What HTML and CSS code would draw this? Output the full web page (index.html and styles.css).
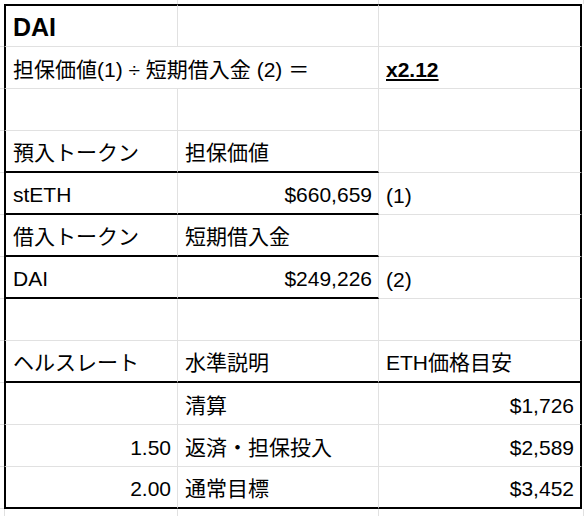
FILE: index.html
```html
<!DOCTYPE html>
<html lang="ja">
<head>
<meta charset="utf-8">
<title>DAI</title>
<link rel="stylesheet" href="styles.css">
</head>
<body>
<div class="sheet">
  <!-- top strip -->
  <div class="strip"></div>
  <div class="strip t"></div>
  <div class="strip t"></div>
  <div class="strip"></div>
  <div class="strip t"></div>

  <!-- row 1 -->
  <div class="e"></div>
  <div class="c a r1 title">DAI</div>
  <div class="c r1"></div>
  <div class="c z r1"></div>
  <div class="x"></div>

  <!-- row 2 -->
  <div class="e"></div>
  <div class="c a span2">担保価値(1) ÷ 短期借入金 (2) ＝</div>
  <div class="c z"><span class="ratio">x2.12</span></div>
  <div class="x"></div>

  <!-- row 3 -->
  <div class="e"></div>
  <div class="c a"></div>
  <div class="c"></div>
  <div class="c z"></div>
  <div class="x"></div>

  <!-- row 4 -->
  <div class="e"></div>
  <div class="c a bb">預入トークン</div>
  <div class="c bb">担保価値</div>
  <div class="c z"></div>
  <div class="x"></div>

  <!-- row 5 -->
  <div class="e"></div>
  <div class="c a bb">stETH</div>
  <div class="c bb num">$660,659</div>
  <div class="c z">(1)</div>
  <div class="x"></div>

  <!-- row 6 -->
  <div class="e"></div>
  <div class="c a bb">借入トークン</div>
  <div class="c bb">短期借入金</div>
  <div class="c z"></div>
  <div class="x"></div>

  <!-- row 7 -->
  <div class="e"></div>
  <div class="c a bb">DAI</div>
  <div class="c bb num">$249,226</div>
  <div class="c z">(2)</div>
  <div class="x"></div>

  <!-- row 8 -->
  <div class="e"></div>
  <div class="c a"></div>
  <div class="c"></div>
  <div class="c z"></div>
  <div class="x"></div>

  <!-- row 9 -->
  <div class="e"></div>
  <div class="c a bb">ヘルスレート</div>
  <div class="c bb">水準説明</div>
  <div class="c z bb">ETH価格目安</div>
  <div class="x"></div>

  <!-- row 10 -->
  <div class="e"></div>
  <div class="c a num"></div>
  <div class="c">清算</div>
  <div class="c z num">$1,726</div>
  <div class="x"></div>

  <!-- row 11 -->
  <div class="e"></div>
  <div class="c a num">1.50</div>
  <div class="c">返済・担保投入</div>
  <div class="c z num">$2,589</div>
  <div class="x"></div>

  <!-- row 12 -->
  <div class="e"></div>
  <div class="c a bb num">2.00</div>
  <div class="c bb">通常目標</div>
  <div class="c z bb num">$3,452</div>
  <div class="x"></div>

  <!-- bottom strip -->
  <div class="strip"></div>
  <div class="strip t bl"></div>
  <div class="strip t"></div>
  <div class="strip"></div>
  <div class="strip t"></div>
</div>
</body>
</html>
```

FILE: styles.css
```css
html, body {
  margin: 0;
  padding: 0;
  background: #fff;
}

.sheet {
  display: grid;
  grid-template-columns: 4px 174px 201px 203px 2px;
  grid-template-rows: 4px 43px repeat(11, 42px) 7px;
  width: 584px;
  height: 516px;
  overflow: hidden;
  font-family: "Liberation Sans", "Noto Sans CJK JP", sans-serif;
  font-size: 21px;
  line-height: 24px;
  color: #000;
}

.sheet > div {
  box-sizing: border-box;
  min-width: 0;
}

.strip.t {
  border-right: 1px solid #e1e1e1;
}

.strip.bl {
  border-left: 1px solid #e1e1e1;
}

.e {
  border-bottom: 1px solid #e1e1e1;
}

.c {
  display: flex;
  align-items: flex-end;
  padding: 0 6px 6px 7px;
  white-space: nowrap;
  border-right: 1px solid #e1e1e1;
  border-bottom: 1px solid #e1e1e1;
}

.c.a {
  border-left: 2px solid #000;
}

.c.z {
  border-right: 2px solid #000;
}

.c.r1 {
  border-top: 2px solid #000;
}

.c.bb {
  border-bottom: 2px solid #000;
}

.c.num {
  justify-content: flex-end;
}

.span2 {
  grid-column: span 2;
}

.title {
  font-weight: bold;
  font-size: 25px;
  padding-bottom: 7px;
}

.ratio {
  font-weight: bold;
  text-decoration: underline;
  text-decoration-thickness: 2px;
  text-underline-offset: 2px;
}
```
